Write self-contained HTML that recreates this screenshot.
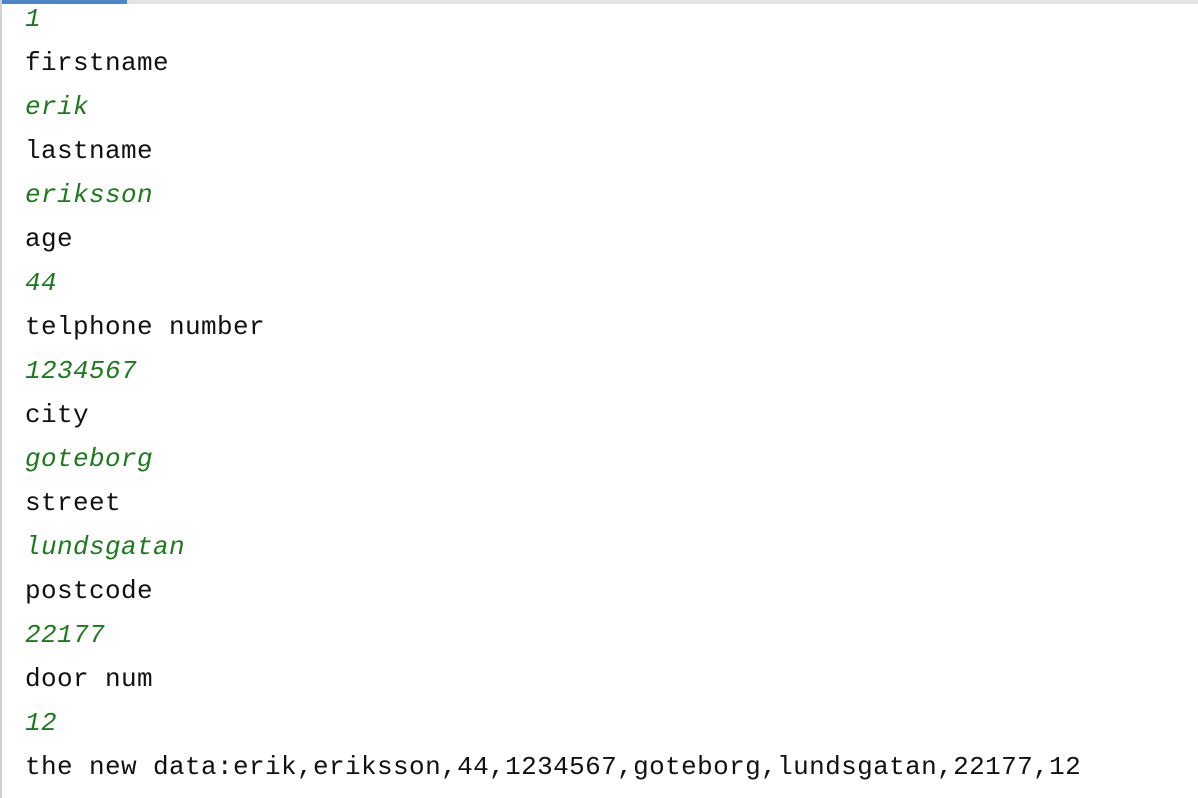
<!DOCTYPE html>
<html><head><style>
html,body{margin:0;padding:0;background:#fff;width:1198px;height:798px;overflow:hidden;}
.top{position:absolute;left:0;top:0;width:1198px;height:4px;background:#e3e3e3;}
.blue{position:absolute;left:0;top:0;width:127px;height:4px;background:#4a86c8;}
.left{position:absolute;left:0;top:0;width:2px;height:798px;background:#d0d0d0;}
.l{position:absolute;left:25px;font-family:"Liberation Mono",monospace;font-size:26px;letter-spacing:0.4px;line-height:44px;color:#111;white-space:pre;}
.g{color:#1d7a1d;font-style:italic;}
</style></head><body>
<div class="top"></div><div class="blue"></div><div class="left"></div>
<div class="l g" style="top:-3px">1</div>
<div class="l" style="top:41px">firstname</div>
<div class="l g" style="top:85px">erik</div>
<div class="l" style="top:129px">lastname</div>
<div class="l g" style="top:173px">eriksson</div>
<div class="l" style="top:217px">age</div>
<div class="l g" style="top:261px">44</div>
<div class="l" style="top:305px">telphone number</div>
<div class="l g" style="top:349px">1234567</div>
<div class="l" style="top:393px">city</div>
<div class="l g" style="top:437px">goteborg</div>
<div class="l" style="top:481px">street</div>
<div class="l g" style="top:525px">lundsgatan</div>
<div class="l" style="top:569px">postcode</div>
<div class="l g" style="top:613px">22177</div>
<div class="l" style="top:657px">door num</div>
<div class="l g" style="top:701px">12</div>
<div class="l" style="top:745px">the new data:erik,eriksson,44,1234567,goteborg,lundsgatan,22177,12</div>
</body></html>
